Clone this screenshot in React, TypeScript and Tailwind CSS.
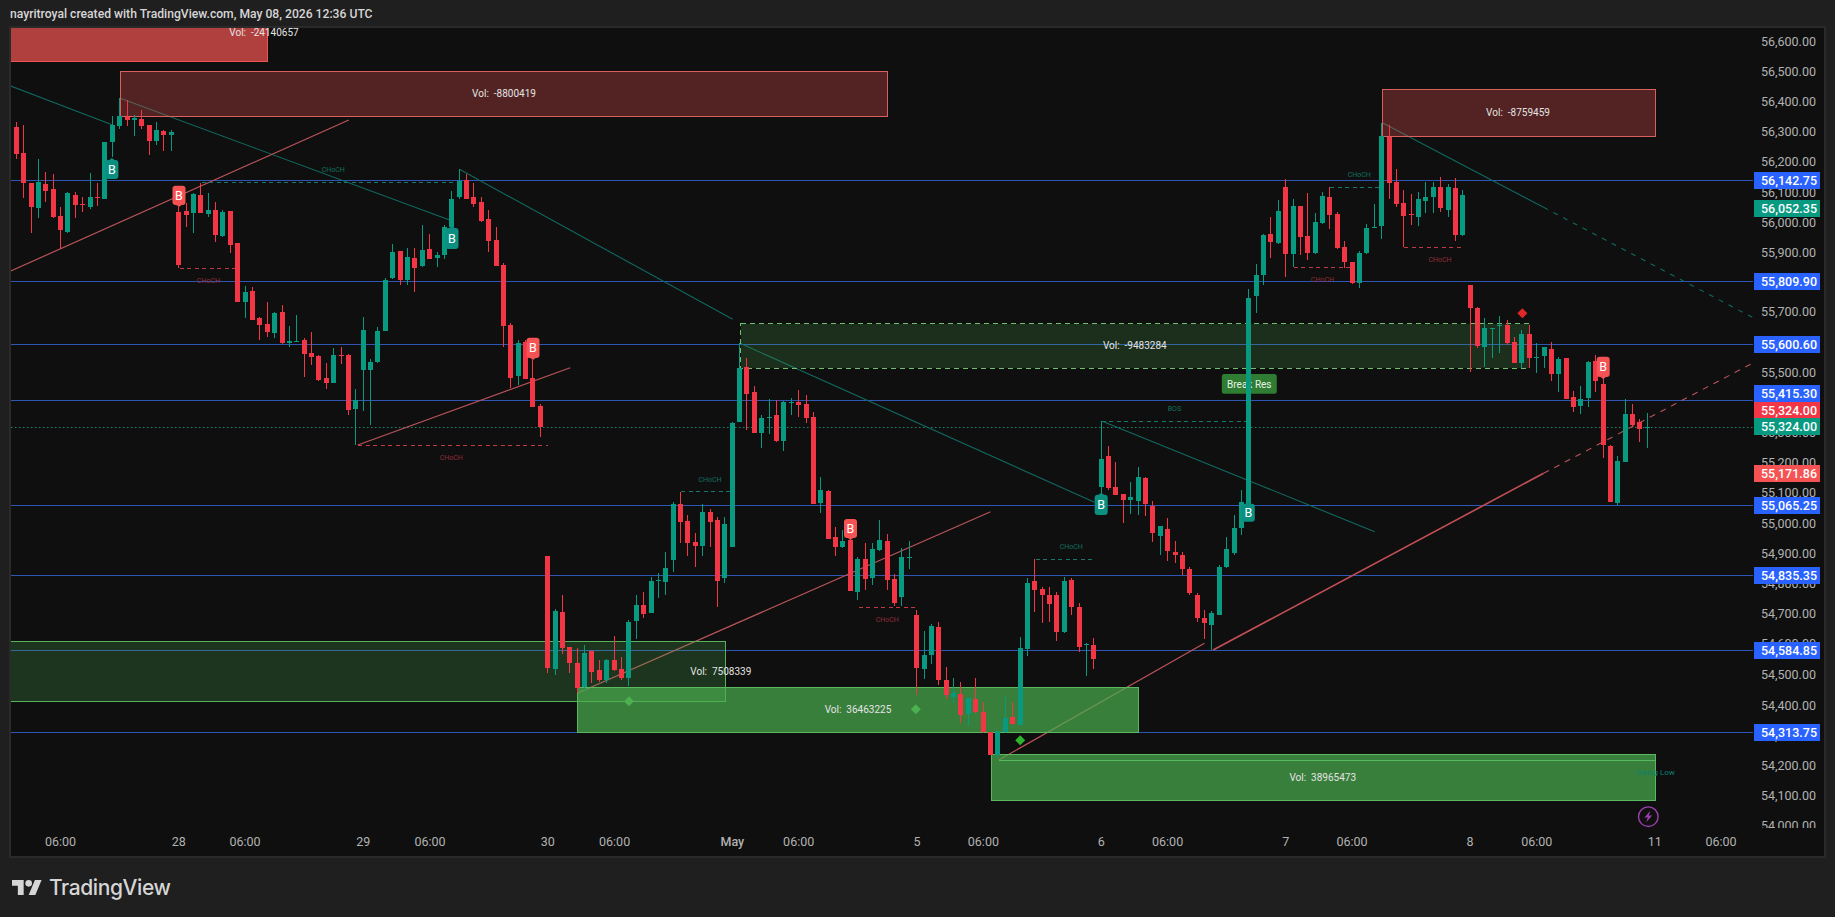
import React from "react";

type C = [number, "r" | "g", number, number, number, number];
const candles: C[] = [
  [-23,"g",125,153,123,155],[-22,"r",127,154,122,159],[-21,"r",153,183,125,198],[-20,"r",183,207,183,233],[-19,"g",182,208,159,218],[-18,"r",184,191,172,202],[-17,"r",189,217,174,218],[-16,"r",216,230,207,249],[-15,"g",193,232,192,233],[-14,"r",195,205,192,218],[-13,"r",204,205,197,212],[-12,"g",197,207,173,209],[-11,"r",197,198,183,206],[-10,"g",142,199,142,199],[-9,"g",125,142,116,157],[-8,"g",116,126,98,129],[-7,"r",117,120,100,126],[-6,"g",118,120,115,136],[-5,"r",119,126,110,129],[-4,"r",125,141,125,155],[-3,"g",130,141,122,145],[-2,"r",131,135,130,151],[-1,"g",132,135,130,151],
  [0,"r",212,265,207,268],[1,"r",211,215,203,227],[2,"g",194,213,193,233],[3,"r",195,213,183,213],[4,"g",210,214,193,217],[5,"r",210,235,202,242],[6,"g",212,236,210,237],[7,"r",211,245,211,253],[8,"r",243,302,243,302],[9,"g",292,302,286,318],[10,"r",291,320,287,320],[11,"r",318,325,317,340],[12,"r",324,332,302,337],[13,"g",313,333,312,338],[14,"r",312,343,305,344],[15,"g",341,343,326,347],[16,"g",341,342,315,342],[17,"r",340,354,338,377],[18,"r",353,357,332,365],[19,"r",356,380,355,381],[20,"r",378,383,363,389],[21,"g",355,383,348,383],[22,"r",355,356,347,364],[23,"r",355,410,354,415],[24,"g",400,409,389,445],
  [25,"g",330,370,317,411],[26,"g",362,370,359,425],[27,"g",331,362,327,363],[28,"g",280,331,278,331],[29,"g",252,278,244,279],[30,"r",251,280,251,285],[31,"g",257,280,248,285],[32,"r",258,268,248,292],[33,"g",250,266,225,267],[34,"r",249,259,234,259],[35,"g",255,258,252,267],[36,"g",227,255,225,259],[37,"g",199,227,191,227],[38,"g",181,197,169,199],[39,"r",180,199,174,199],[40,"r",197,204,183,207],[41,"r",202,221,197,222],[42,"r",219,241,210,252],[43,"r",240,266,227,266],[44,"r",265,326,263,347],[45,"r",325,378,323,388],[46,"g",343,376,340,385],[47,"r",342,379,340,379],[48,"r",378,407,360,407],[49,"r",406,427,404,437],
  [50,"r",556,668,556,673],[51,"g",611,669,609,675],[52,"r",612,648,595,654],[53,"r",647,663,647,673],[54,"r",663,688,648,693],[55,"g",653,687,645,690],[56,"r",651,672,651,683],[57,"r",670,680,660,682],[58,"g",660,680,659,683],[59,"r",660,670,636,671],[60,"r",669,678,657,680],[61,"g",622,678,620,686],[62,"g",605,621,595,639],[63,"r",605,614,592,618],[64,"g",581,613,577,613],[65,"g",580,581,573,598],[66,"g",568,582,552,595],[67,"g",504,560,502,572],[68,"r",504,522,492,543],[69,"r",521,543,515,556],[70,"r",542,546,533,567],[71,"g",512,546,504,556],[72,"r",512,522,509,547],[73,"r",520,581,517,607],[74,"g",524,578,517,583],
  [75,"g",423,547,422,547],[76,"g",368,422,343,422],[77,"r",367,394,358,430],[78,"r",392,433,386,433],[79,"g",418,433,415,448],[80,"g",417,418,399,434],[81,"r",415,441,400,442],[82,"g",402,441,401,451],[83,"g",402,403,398,415],[84,"r",402,405,390,417],[85,"r",404,418,395,423],[86,"r",417,504,412,504],[87,"g",490,503,477,513],[88,"r",491,539,490,539],[89,"r",537,547,527,556],[90,"g",541,547,530,548],[91,"r",540,591,538,591],[92,"g",559,592,557,600],[93,"r",559,579,543,590],[94,"g",549,578,543,585],[95,"g",540,550,520,551],[96,"r",541,580,534,590],[97,"r",579,603,574,606],[98,"g",557,597,548,606],[99,"g",557,558,541,569],
  [100,"r",615,668,610,695],[101,"g",655,669,631,679],[102,"g",626,655,624,664],[103,"r",627,680,622,685],[104,"r",680,695,667,699],[105,"g",693,697,678,703],[106,"r",694,715,682,723],[107,"g",698,714,698,726],[108,"r",699,712,678,713],[109,"r",712,732,702,733],[110,"r",732,755,732,755],[111,"g",731,755,731,758],[112,"g",718,732,697,733],[113,"r",717,724,702,725],[114,"g",648,725,637,725],[115,"g",583,649,578,656],[116,"r",581,590,559,612],[117,"r",589,595,587,623],[118,"r",595,604,587,622],[119,"r",595,632,592,641],[120,"g",581,632,577,633],[121,"r",580,607,578,615],[122,"r",607,647,603,652],[123,"g",644,645,643,676],[124,"r",645,659,638,669],
  [125,"g",459,487,421,493],[126,"r",456,488,446,490],[127,"r",487,495,462,495],[128,"r",494,500,494,523],[129,"g",497,500,482,514],[130,"g",477,501,467,515],[131,"r",478,504,477,516],[132,"r",506,533,501,542],[133,"g",526,536,526,555],[134,"r",529,551,518,561],[135,"r",552,555,541,563],[136,"r",555,569,552,575],[137,"r",569,593,567,595],[138,"r",595,618,593,622],[139,"r",618,623,610,639],[140,"g",613,625,611,650],[141,"g",567,615,565,615],[142,"g",549,567,537,568],[143,"g",528,553,515,555],[144,"g",502,528,490,535],[145,"g",298,505,289,505],[146,"g",275,296,264,313],[147,"g",235,275,234,285],[148,"r",234,242,217,258],[149,"g",211,243,200,244],
  [150,"r",187,254,179,277],[151,"g",206,254,199,267],[152,"r",206,237,206,255],[153,"r",236,253,193,260],[154,"g",222,253,213,254],[155,"g",196,223,192,224],[156,"r",197,215,187,229],[157,"r",214,248,212,249],[158,"r",247,262,241,268],[159,"r",262,283,262,284],[160,"g",253,283,251,288],[161,"g",228,253,224,254],[162,"g",227,228,204,228],[163,"g",136,226,123,239],[164,"r",137,183,125,199],[165,"r",182,204,169,207],[166,"r",203,216,190,247],[167,"r",214,215,194,225],[168,"g",199,217,192,226],[169,"g",197,201,182,213],[170,"g",187,197,182,213],[171,"r",187,208,177,212],[172,"g",187,210,184,217],[173,"r",188,235,178,241],[174,"g",195,235,190,236],
  [175,"r",285,308,285,372],[176,"r",308,346,307,348],[177,"g",328,347,318,367],[178,"g",328,329,328,358],[179,"g",325,326,316,353],[180,"r",325,343,320,345],[181,"r",342,363,337,363],[182,"g",334,363,330,368],[183,"r",334,358,325,368],[184,"g",357,358,343,373],[185,"g",347,356,347,368],[186,"r",349,374,342,381],[187,"g",359,374,357,392],[188,"r",358,399,358,399],[189,"r",397,407,391,412],[190,"g",399,406,386,414],[191,"g",362,398,361,407],[192,"r",361,381,355,392],[193,"r",384,445,360,458],[194,"r",446,502,445,502],[195,"g",461,503,456,505],[196,"g",414,462,399,462],[197,"r",414,425,404,427],[198,"r",422,429,419,442],[199,"g",427,428,413,448],
];

const blue = [180.5, 281, 344.3, 400.3, 505.3, 575.3, 650.5, 732.3];

const axisPrices: [string, number][] = [
  ["56,600.00",41.7],["56,500.00",71.7],["56,400.00",101.7],["56,300.00",131.7],["56,200.00",161.7],["56,100.00",192.7],["56,000.00",222.7],["55,900.00",252.7],["55,700.00",312.3],["55,500.00",373.3],["55,300.00",433.3],["55,200.00",463],["55,100.00",493],["55,000.00",524.3],["54,900.00",554.3],["54,800.00",584.3],["54,700.00",614.3],["54,600.00",644.3],["54,500.00",674.7],["54,400.00",705.7],["54,300.00",735.7],["54,200.00",765.7],["54,100.00",795.7],["54,000.00",826.3],
];

const BLUE = "#2962ff", TEAL = "#089981", RED = "#f23645", SOFT = "#f55353";
const tags: [string, number, string][] = [
  ["56,142.75",180.5,BLUE],["56,052.35",208.3,TEAL],["55,809.90",281,BLUE],["55,600.60",344,BLUE],["55,415.30",393.3,BLUE],["55,324.00",410,RED],["55,324.00",426.7,TEAL],["55,171.86",473.3,SOFT],["55,065.25",505,BLUE],["54,835.35",575,BLUE],["54,584.85",650,BLUE],["54,313.75",732.3,BLUE],
];

const times: [string, number][] = [
  ["06:00",60.5],["28",178.7],["06:00",245],["29",363.2],["06:00",430],["30",547.7],["06:00",614.6],["May",732.3],["06:00",798.7],["5",917],["06:00",983.4],["6",1101.2],["06:00",1167.6],["7",1285.7],["06:00",1352],["8",1470],["06:00",1536.8],["11",1654.7],["06:00",1721],
];

const tealLines = [
  [10.7,86,112.7,125],[120.2,98.3,449.6,220],[459.5,169.3,732.7,319.3],[740.2,343.3,1094.5,502.3],[1101.6,421,1374.7,531.7],[1382.3,122.7,1543.6,207.3],
];
const redLines = [
  [10.7,271,348.8,120],[357.8,445,570.2,367.7],[577.3,693.3,990.5,511.7],[998.8,760,1204.4,643.3],
];
const structs: [number, number, number, "t" | "r"][] = [
  [201.7,459.5,182.7,"t"],[179.5,236.5,268,"r"],[358,547.6,445,"r"],[681.3,730,491.3,"t"],[858.8,916.6,607.3,"r"],[1035.6,1094.5,559.3,"t"],[1101.6,1248,421.3,"t"],[1330.3,1382.3,187.3,"t"],[1293.9,1352.7,267.3,"r"],[1404.3,1463.9,247.3,"r"],
];
const smallLabels: [string, number, number, "t" | "r"][] = [
  ["CHoCH",333.3,169.3,"t"],["CHoCH",208.4,280.3,"r"],["CHoCH",451.2,457.3,"r"],["CHoCH",710,479.3,"t"],["CHoCH",887.3,619.3,"r"],["CHoCH",1071.2,546.3,"t"],["BOS",1174.4,408.3,"t"],["CHoCH",1359.2,174.3,"t"],["CHoCH",1322.4,279.3,"r"],["CHoCH",1440,259.3,"r"],
];
const zones: [number, number, number, number, string, number, string, string?][] = [
  [5,27,267.2,61.2,"#ef5350",0.72,"#ef5350"],
  [120,71,887.2,116.2,"#ef5350",0.3,"#d9605f"],
  [1382.3,89,1655.1,136.1,"#ef5350",0.3,"#d9605f"],
  [740.2,323.3,1529.1,367.8,"#4caf50",0.2,"#6fbf6f","5 4"],
  [5,641.3,725.1,700.8,"#4caf50",0.24,"#58b25b"],
  [577.3,687,1138.3,732.2,"#4caf50",0.7,"#5cb85f"],
  [991.3,754.3,1655.1,800.2,"#4caf50",0.7,"#5cb85f"],
];
const vols: [string, number, number][] = [
  ["Vol:  -24140657",264,32.7],["Vol:  -8800419",504,93.7],["Vol:  -8759459",1518,112.7],["Vol:  -9483284",1134.8,345.7],["Vol:  7508339",720.8,671.7],["Vol:  36463225",858,709.7],["Vol:  38965473",1322.7,777.7],
];
const marks: [number, number, number, boolean][] = [
  [111.9,158,179,true],[179,185.7,207,false],[452,226,249,true],[533,337.7,360,false],[850.5,519,540,false],[1101.2,492.7,515,true],[1248.3,501.7,521.7,true],[1603.2,356.7,379,false],
];
const diamonds: [number, number, string][] = [
  [629,701.3,"#4caf50"],[915.8,709.3,"#4caf50"],[1020.2,740.3,"#2db52d"],[1522.4,313.3,"#e02828"],
];

function BadgeB({ m }: { m: [number, number, number, boolean] }) {
  const [cx, top, bottom, up] = m;
  const fill = up ? "#0b8f80" : "#f55353";
  const w = 13;
  const tip = up
    ? `${cx - 4},${top + 3} ${cx},${top} ${cx + 4},${top + 3}`
    : `${cx - 4},${bottom - 3} ${cx},${bottom} ${cx + 4},${bottom - 3}`;
  const rectY = up ? top + 2 : top;
  const rectH = bottom - top - 2;
  return (
    <g>
      <rect x={cx - w / 2} y={rectY} width={w} height={rectH} rx={3} fill={fill} />
      <polygon points={tip} fill={fill} />
      <text x={cx} y={rectY + rectH / 2 + 4.5} textAnchor="middle" className="fill-white text-[12.5px] [font-family:Roboto,sans-serif]">
        B
      </text>
    </g>
  );
}

export default function App() {
  return (
    <div className="flex h-[917px] w-[1835px] flex-col overflow-hidden bg-[#1f1f1f] [font-family:Roboto,sans-serif]">
      <header className="flex h-[26px] shrink-0 items-center pl-[10px] pt-[3px] text-[12.15px] font-medium text-[#d6d6d6]">
        nayritroyal created with TradingView.com, May 08, 2026 12:36 UTC
      </header>

      <main className="ml-[9px] flex h-[832px] w-[1817px] shrink-0 flex-col border-2 border-[#2a2a2a] bg-[#0f0f0f]">
        <div className="flex h-[800px] shrink-0">
          <div className="w-[1742px] shrink-0">
            <svg width={1742} height={800} viewBox="11 28 1742 800" className="block">
              {blue.map((y) => (
                <line key={y} x1={11} x2={1753} y1={y} y2={y} stroke="#2f55b5" strokeWidth={1} shapeRendering="crispEdges" />
              ))}
              <line x1={11} x2={1753} y1={427.5} y2={427.5} stroke="#168a76" strokeWidth={1} strokeDasharray="1.5 2.5" />

              {tealLines.map((l, i) => (
                <line key={i} x1={l[0]} y1={l[1]} x2={l[2]} y2={l[3]} stroke="#10695f" strokeWidth={1.1} />
              ))}
              <line x1={1543.6} y1={207.3} x2={1752.3} y2={317.3} stroke="#10695f" strokeWidth={1.1} strokeDasharray="5 6" />
              {redLines.map((l, i) => (
                <line key={i} x1={l[0]} y1={l[1]} x2={l[2]} y2={l[3]} stroke="#b9545a" strokeWidth={1.2} />
              ))}
              <line x1={1213.1} y1={650} x2={1543.6} y2={473.3} stroke="#c24f55" strokeWidth={1.6} />
              <line x1={1543.6} y1={473.3} x2={1752.3} y2={363.3} stroke="#b9545a" strokeWidth={1.1} strokeDasharray="6 6" />
              {structs.map(([a, b, y, k], i) => (
                <line key={i} x1={a} x2={b} y1={y} y2={y} stroke={k === "t" ? "#13796a" : "#c23a45"} strokeWidth={1} strokeDasharray="4 3.5" shapeRendering="crispEdges" />
              ))}

              {zones.map(([x1, y1, x2, y2, fill, op, stroke, dash], i) => (
                <rect key={i} x={x1 + 0.5} y={y1 + 0.5} width={x2 - x1} height={y2 - y1} fill={fill} fillOpacity={op} stroke={stroke} strokeWidth={1} strokeDasharray={dash} shapeRendering="crispEdges" />
              ))}
              <line x1={999} x2={1655.1} y1={760.5} y2={760.5} stroke="#5cb85f" strokeWidth={1} shapeRendering="crispEdges" />

              <rect x={1221.8} y={374} width={55} height={19.7} rx={2.5} fill="#2e7d32" />
              <text x={1249.3} y={387.5} textAnchor="middle" className="fill-[#e8f2e8] text-[10px] [font-family:Roboto,sans-serif]">
                Break Res
              </text>

              {candles.map(([i, k, bt, bb, wt, wb]) => {
                const cx = 178.7 + 7.38 * i;
                const col = k === "r" ? "#f23645" : "#089981";
                return (
                  <g key={i} fill={col} shapeRendering="crispEdges">
                    <rect x={Math.round(cx - 0.5)} y={wt} width={1} height={wb - wt} />
                    <rect x={Math.round(cx - 0.5) - 2} y={bt} width={5} height={Math.max(1, bb - bt)} />
                  </g>
                );
              })}

              {diamonds.map(([x, y, c], i) => (
                <polygon key={i} points={`${x},${y - 5} ${x + 5},${y} ${x},${y + 5} ${x - 5},${y}`} fill={c} />
              ))}
              {marks.map((m, i) => (
                <BadgeB key={i} m={m} />
              ))}

              {vols.map(([t, x, y]) => (
                <text key={t} x={x} y={y + 3.5} textAnchor="middle" xmlSpace="preserve" className="fill-[#e4e4e4] text-[10px] [font-family:Roboto,sans-serif]">
                  {t}
                </text>
              ))}
              {smallLabels.map(([t, x, y, k], i) => (
                <text key={i} x={x} y={y + 3} textAnchor="middle" className={k === "t" ? "fill-[#12705f] text-[7px] [font-family:Roboto,sans-serif]" : "fill-[#8f2c38] text-[7px] [font-family:Roboto,sans-serif]"}>
                  {t}
                </text>
              ))}
              <text x={1655.6} y={774.5} textAnchor="middle" className="fill-[#0d7f6c] text-[8px] [font-family:Roboto,sans-serif]">
                Swing Low
              </text>

              <g transform="translate(1648.3 816.7)">
                <circle r={9.8} fill="none" stroke="#9c3fb0" strokeWidth={1.4} />
                <path d="M2,-6 L-4,1 L-0.5,0.5 L-2,5.5 L4,-1.5 L0.5,-1 Z" fill="#9c3fb0" />
              </g>
            </svg>
          </div>

          <div className="relative w-[71px] shrink-0 overflow-hidden text-[12.5px]">
            {axisPrices.map(([t, y]) => (
              <div key={t} className="absolute left-[8px] leading-[16px] text-[#b2b2b2]" style={{ top: y - 28 - 8 }}>
                {t}
              </div>
            ))}
            {tags.map(([t, y, c]) => (
              <div key={t + y} className="absolute left-[1px] h-[17px] w-[66px] pl-[7px] font-medium leading-[17px] text-white" style={{ top: y - 28 - 8.5, backgroundColor: c }}>
                {t}
              </div>
            ))}
          </div>
        </div>

        <div className="relative h-[28px] shrink-0 text-[12.5px] text-[#b2b2b2]">
          {times.map(([t, x]) => (
            <span key={t + x} className={t === "May" ? "absolute top-[6px] -translate-x-1/2 font-medium leading-[16px]" : "absolute top-[6px] -translate-x-1/2 leading-[16px]"} style={{ left: x - 11 }}>
              {t}
            </span>
          ))}
        </div>
      </main>

      <footer className="flex flex-1 items-center gap-[7px] pb-[1px] pl-[12px] text-[#d6d6d6]">
        <svg width={30} height={15} viewBox="0 4 36 18" fill="currentColor" className="shrink-0">
          <path d="M14 22H7V11H0V4h14v18zM28 22h-8l7.5-18h8L28 22z" />
          <circle cx={20} cy={8} r={4} />
        </svg>
        <span className="text-[21px] font-medium leading-none tracking-[-0.4px] [font-family:Inter,sans-serif]">TradingView</span>
      </footer>
    </div>
  );
}
